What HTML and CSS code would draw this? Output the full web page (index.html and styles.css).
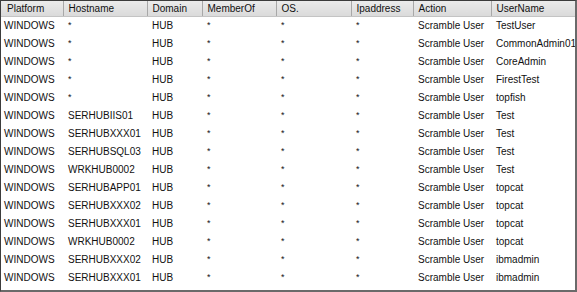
FILE: index.html
```html
<!DOCTYPE html>
<html lang="en">
<head>
  <meta charset="UTF-8" />
  <title>Account Actions</title>
  <link rel="stylesheet" href="styles.css">
</head>
<body>
  <div class="grid">
    <table class="list">
      <colgroup>
        <col class="c-platform"><col class="c-host"><col class="c-domain"><col class="c-member">
        <col class="c-os"><col class="c-ip"><col class="c-action"><col class="c-user">
      </colgroup>
      <thead>
        <tr>
          <th>Platform</th><th>Hostname</th><th>Domain</th><th>MemberOf</th>
          <th>OS.</th><th>Ipaddress</th><th>Action</th><th>UserName</th>
        </tr>
      </thead>
      <tbody id="rows"></tbody>
    </table>
  </div>

  <script>
    const rows = [
      ["*", "TestUser"],
      ["*", "CommonAdmin01"],
      ["*", "CoreAdmin"],
      ["*", "FirestTest"],
      ["*", "topfish"],
      ["SERHUBIIS01", "Test"],
      ["SERHUBXXX01", "Test"],
      ["SERHUBSQL03", "Test"],
      ["WRKHUB0002", "Test"],
      ["SERHUBAPP01", "topcat"],
      ["SERHUBXXX02", "topcat"],
      ["SERHUBXXX01", "topcat"],
      ["WRKHUB0002", "topcat"],
      ["SERHUBXXX02", "ibmadmin"],
      ["SERHUBXXX01", "ibmadmin"]
    ];

    const body = document.getElementById("rows");
    rows.forEach(r => {
      const cells = ["WINDOWS", r[0], "HUB", "*", "*", "*", "Scramble User", r[1]];
      const tr = document.createElement("tr");
      cells.forEach(c => {
        const td = document.createElement("td");
        td.textContent = c;
        if (c === "*") td.className = "star";
        tr.appendChild(td);
      });
      body.appendChild(tr);
    });
  </script>
</body>
</html>
```

FILE: styles.css
```css
body {
  margin: 0;
  background: white;
  font-family: "Liberation Sans", Arial, sans-serif;
  font-size: 10px;
  color: #111;
}
.grid {
  width: 574px;
  height: 289px;
  border-top: 1px solid #3c3c3c;
  border-left: 1px solid #3c3c3c;
  border-right: 2px solid #6a6a6a;
  border-bottom: 2px solid #6a6a6a;
  overflow: hidden;
  background: white;
}
.list {
  border-collapse: collapse;
  table-layout: fixed;
  width: 574px;
}
.c-platform { width: 62px; }
.c-host { width: 84px; }
.c-domain { width: 55px; }
.c-member { width: 74px; }
.c-os { width: 75px; }
.c-ip { width: 62px; }
.c-action { width: 78px; }
.c-user { width: 84px; }

th {
  height: 15px;
  padding: 0 0 0 5px;
  font-weight: normal;
  text-align: left;
  white-space: nowrap;
  overflow: hidden;
  background: linear-gradient(#ebebeb, #dadada);
  border-right: 1px solid #a8a8a8;
  border-bottom: 1px solid #c4c4c4;
  line-height: 15px;
}
th:first-child {
  padding-left: 6px;
}
th:last-child {
  border-right: none;
}
td {
  height: 18px;
  padding: 0 0 0 5px;
  white-space: nowrap;
  overflow: hidden;
  line-height: 18px;
}
td:first-child {
  padding-left: 3px;
}
td.star {
  vertical-align: top;
  line-height: 11px;
  font-size: 9px;
  padding-top: 3px;
  height: 15px;
}
```
